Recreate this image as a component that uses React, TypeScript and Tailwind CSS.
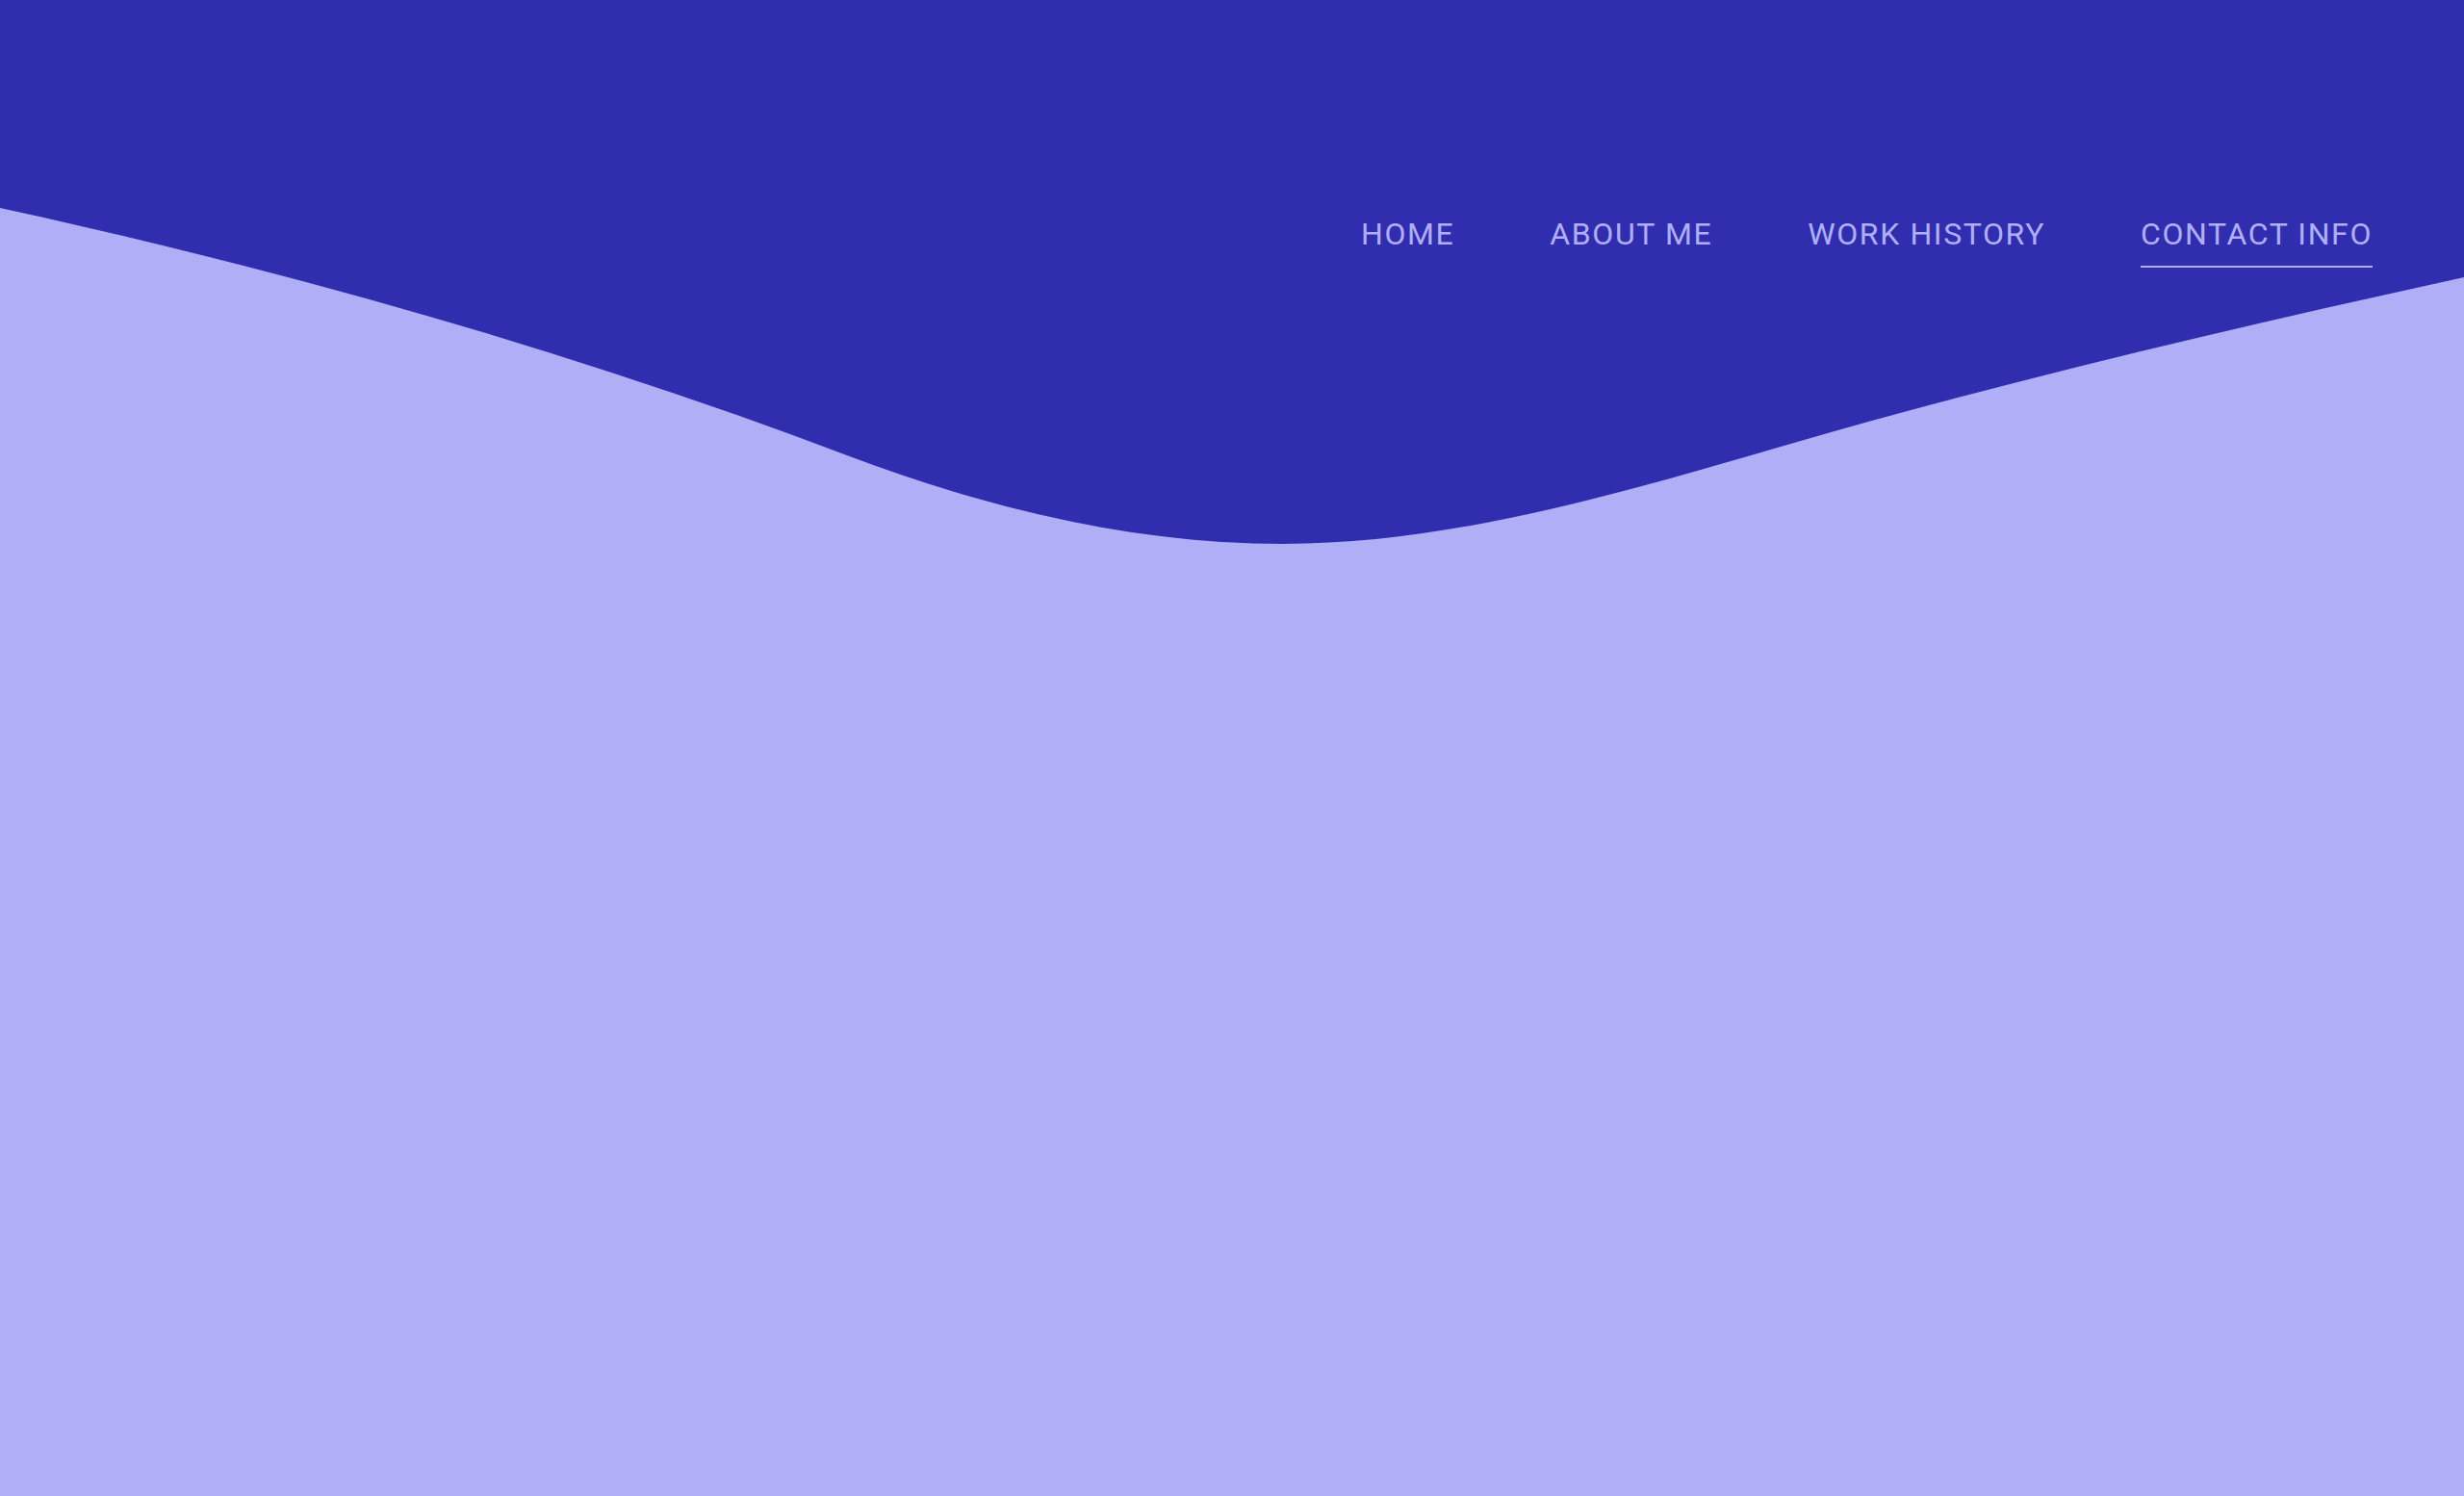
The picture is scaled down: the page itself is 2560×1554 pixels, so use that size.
const links = [
  { label: "HOME", active: false },
  { label: "ABOUT ME", active: false },
  { label: "WORK HISTORY", active: false },
  { label: "CONTACT INFO", active: true },
];

const Wave = () => (
  <svg className="absolute inset-0 h-full w-full" viewBox="0 0 2560 1554" preserveAspectRatio="none">
    <path
      fill="#b0aef7"
      d="M0,216 C293,280 587,362 880,473 C1031,530 1182,565 1333,565 C1505,565 1678,514 1850,464 C2087,395 2323,340 2560,288 L2560,1554 L0,1554 Z"
    />
  </svg>
);

export default function App() {
  return (
    <div className="relative h-screen w-full overflow-hidden bg-[#302eae]" style={{ fontFamily: "Roboto, 'Noto Sans', sans-serif" }}>
      <Wave />
      <nav className="relative z-10 flex justify-end gap-[99px] pr-[95px] pt-[227px]">
        {links.map((l) => (
          <a
            key={l.label}
            href="#"
            className={`border-b-2 pb-[17px] text-[32px] leading-none tracking-wider text-[#b0aef7] ${l.active ? "border-[#b0aef7]" : "border-transparent"}`}
          >
            {l.label}
          </a>
        ))}
      </nav>
    </div>
  );
}
